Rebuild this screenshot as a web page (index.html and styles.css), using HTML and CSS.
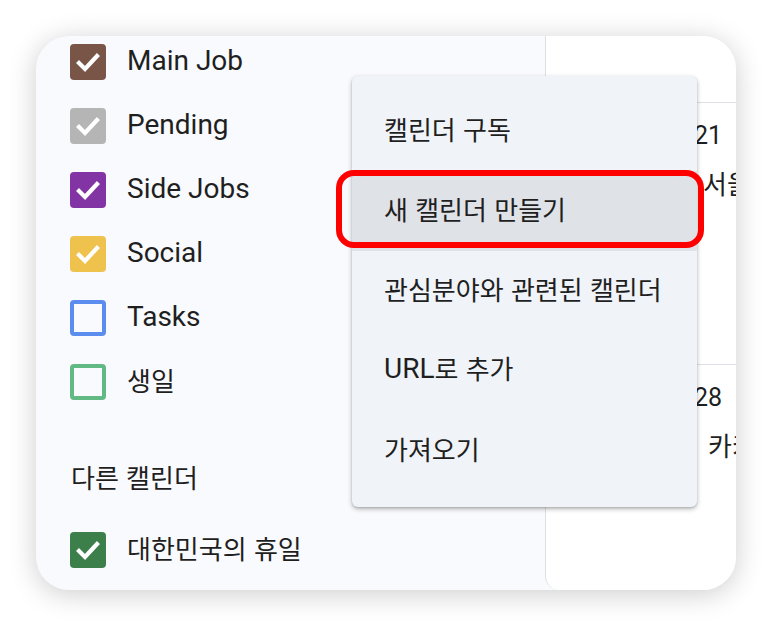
FILE: index.html
```html
<!DOCTYPE html>
<html lang="ko">
<head>
<meta charset="utf-8">
<title>Calendar menu</title>
<link rel="stylesheet" href="styles.css">
</head>
<body>
<div class="card">
  <aside class="sidebar">
    <ul class="cal-list">
      <li class="cal">
        <span class="box fill brown"><svg viewBox="0 0 36 36"><polyline points="9,19 15,25 27,12"/></svg></span>
        <span class="label">Main Job</span>
      </li>
      <li class="cal">
        <span class="box fill grey"><svg viewBox="0 0 36 36"><polyline points="9,19 15,25 27,12"/></svg></span>
        <span class="label">Pending</span>
      </li>
      <li class="cal">
        <span class="box fill purple"><svg viewBox="0 0 36 36"><polyline points="9,19 15,25 27,12"/></svg></span>
        <span class="label">Side Jobs</span>
      </li>
      <li class="cal">
        <span class="box fill yellow"><svg viewBox="0 0 36 36"><polyline points="9,19 15,25 27,12"/></svg></span>
        <span class="label">Social</span>
      </li>
      <li class="cal">
        <span class="box empty blue"></span>
        <span class="label">Tasks</span>
      </li>
      <li class="cal">
        <span class="box empty green"></span>
        <span class="label ko">생일</span>
      </li>
      <li class="heading ko">다른 캘린더</li>
      <li class="cal">
        <span class="box fill darkgreen"><svg viewBox="0 0 36 36"><polyline points="9,19 15,25 27,12"/></svg></span>
        <span class="label ko">대한민국의 휴일</span>
      </li>
    </ul>
  </aside>
  <section class="main">
    <div class="head-row"></div>
    <div class="week">
      <span class="date">21</span>
      <span class="event ko">서울</span>
    </div>
    <div class="week">
      <span class="date">28</span>
      <span class="event later ko">카카</span>
    </div>
  </section>
  <ul class="menu">
    <li class="item ko">캘린더 구독</li>
    <li class="item active ko">새 캘린더 만들기</li>
    <li class="item ko">관심분야와 관련된 캘린더</li>
    <li class="item">URL<span class="ko">로 추가</span></li>
    <li class="item ko">가져오기</li>
  </ul>
  <div class="highlight"></div>
</div>
</body>
</html>
```

FILE: styles.css
```css
html, body {
  margin: 0;
  padding: 0;
  background: #ffffff;
}

body {
  font-family: Roboto, "Noto Sans CJK KR", sans-serif;
  color: #1f1f1f;
  width: 772px;
  height: 626px;
  overflow: hidden;
}

.card {
  position: relative;
  margin: 36px 0 0 36px;
  width: 700px;
  height: 554px;
  border-radius: 33px;
  overflow: hidden;
  display: flex;
  background: #f8fafd;
  box-shadow: 0 4px 28px rgba(0, 0, 0, 0.2);
}

.sidebar {
  width: 509px;
  flex: none;
  box-sizing: border-box;
  padding: 8px 0 0 34px;
}

.cal-list {
  list-style: none;
  margin: 0;
  padding: 0;
  display: flex;
  flex-direction: column;
  gap: 28px;
}

.cal {
  display: flex;
  align-items: center;
  height: 36px;
  gap: 21px;
  font-size: 28px;
  line-height: 1;
}

.label {
  padding-bottom: 2px;
}

.box {
  width: 36px;
  height: 36px;
  flex: none;
  box-sizing: border-box;
  border-radius: 4px;
  display: flex;
}

.box svg {
  width: 36px;
  height: 36px;
}

.box polyline {
  fill: none;
  stroke: #ffffff;
  stroke-width: 4.2;
  stroke-linecap: square;
  stroke-linejoin: miter;
}

.fill.brown { background: #795548; }
.fill.grey { background: #b5b5b5; }
.fill.purple { background: #8334a4; }
.fill.yellow { background: #efc14d; }
.fill.darkgreen { background: #3c7f4b; }

.empty {
  border: 4px solid;
}

.empty.blue { border-color: #5b8def; }
.empty.green { border-color: #63b984; }

.heading {
  height: 36px;
  display: flex;
  align-items: center;
  margin: 32px 0 8px 1px;
  padding-bottom: 2px;
  box-sizing: border-box;
}

.main {
  flex: 1;
  background: #ffffff;
  border-left: 1px solid #dde1e6;
  border-bottom-left-radius: 14px;
}

.head-row {
  height: 66px;
  border-bottom: 1px solid #dde1e6;
}

.week {
  height: 261px;
  border-bottom: 1px solid #dde1e6;
  display: flex;
  flex-direction: column;
  align-items: flex-start;
  white-space: nowrap;
}

.date {
  font-size: 25px;
  line-height: 1;
  margin: 20px 0 0 148px;
}

.event {
  margin: 22px 0 0 157px;
}

.event.later {
  margin-left: 162px;
}

.menu {
  position: absolute;
  left: 316px;
  top: 40px;
  width: 345px;
  height: 431px;
  box-sizing: border-box;
  margin: 0;
  padding: 15px 0 16px;
  list-style: none;
  background: #f0f3f8;
  border-radius: 6px;
  box-shadow: 0 2px 5px rgba(0, 0, 0, 0.28), 0 1px 2px rgba(0, 0, 0, 0.12);
}

.item {
  height: 80px;
  display: flex;
  align-items: center;
  padding: 0 0 4px 32px;
  box-sizing: border-box;
  font-size: 28px;
  line-height: 1;
}

.item.active {
  background: #dfe2e7;
}

.highlight {
  position: absolute;
  left: 300px;
  top: 134px;
  width: 368px;
  height: 78px;
  box-sizing: border-box;
  border: 6px solid #ff0000;
  border-radius: 18px;
}

/* Korean text runs: Noto Sans CJK, sized to match the hangul widths */
.ko,
.item.ko,
.cal .ko {
  font-family: "Noto Sans CJK KR", sans-serif;
  font-size: 26px;
  line-height: 1;
}

.label.ko {
  padding-bottom: 5px;
}

.item .ko {
  padding-bottom: 2px;
}
```
